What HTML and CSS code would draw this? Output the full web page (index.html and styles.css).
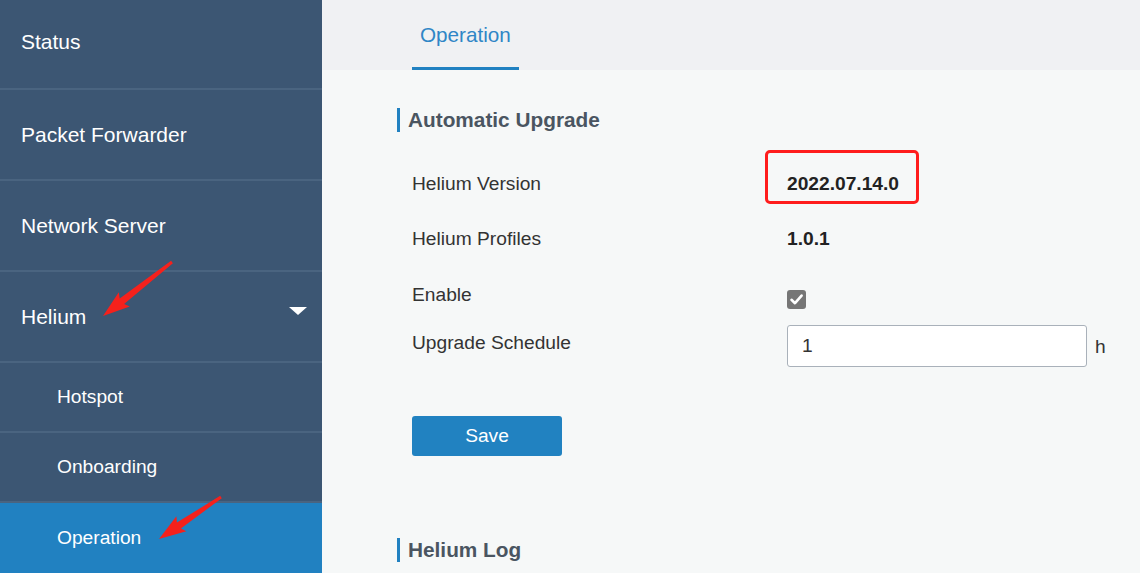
FILE: index.html
```html
<!DOCTYPE html>
<html lang="en">
<head>
<meta charset="utf-8">
<title>Helium Operation</title>
<link rel="stylesheet" href="styles.css">
</head>
<body>
<div class="app">
  <nav class="sidebar">
    <div class="nav-item first">Status</div>
    <div class="nav-item">Packet Forwarder</div>
    <div class="nav-item">Network Server</div>
    <div class="nav-item open">Helium<span class="caret"></span></div>
    <div class="nav-sub">Hotspot</div>
    <div class="nav-sub">Onboarding</div>
    <div class="nav-sub active">Operation</div>
  </nav>
  <main class="main">
    <header class="tabs">
      <div class="tab active">Operation</div>
    </header>
    <section class="content">
      <h2 class="section-title">Automatic Upgrade</h2>
      <div class="form">
        <div class="row r1">
          <div class="label">Helium Version</div>
          <div class="value"><span class="highlight">2022.07.14.0</span></div>
        </div>
        <div class="row r2">
          <div class="label">Helium Profiles</div>
          <div class="value">1.0.1</div>
        </div>
        <div class="row r3">
          <div class="label">Enable</div>
          <div class="field"><span class="checkbox"><svg viewBox="0 0 19 19" width="19" height="19"><path d="M4.5 9.8 L8 13.2 L14.6 5.6" fill="none" stroke="#fff" stroke-width="2.6" stroke-linecap="round" stroke-linejoin="round"/></svg></span></div>
        </div>
        <div class="row r4">
          <div class="label">Upgrade Schedule</div>
          <div class="field"><input class="text-input" type="text" value="1"><span class="unit">h</span></div>
        </div>
        <div class="actions">
          <button class="btn" type="button">Save</button>
        </div>
      </div>
      <h2 class="section-title log">Helium Log</h2>
    </section>
  </main>
</div>
<svg class="annot" width="1140" height="573" viewBox="0 0 1140 573">
  <polygon fill="#f5211c" points="171.1,260.8 119.7,298.4 118.8,292.3 103,316 129.8,306.5 124.1,303.9 172.9,263.2"/>
  <polygon fill="#f5211c" points="220.2,495.8 176.9,522.6 176.4,516.3 159,539 186.4,531.3 180.9,528.4 221.8,498.2"/>
</svg>
</body>
</html>
```
FILE: styles.css
```css
* { box-sizing: border-box; }
html, body { margin: 0; padding: 0; }
body {
  font-family: "Liberation Sans", Arial, sans-serif;
  width: 1140px;
  height: 573px;
  overflow: hidden;
  position: relative;
  background: #f6f8f8;
}
.app { display: flex; height: 573px; }

.sidebar {
  width: 322px;
  flex: none;
  background: #3c5673;
  color: #fff;
  display: flex;
  flex-direction: column;
}
.nav-item {
  height: 91px;
  border-bottom: 2px solid #4a6480;
  font-size: 21px;
  padding-left: 21px;
  display: flex;
  align-items: center;
  position: relative;
}
.nav-item.first { height: 90px; padding-bottom: 4px; }
.nav-item.open { padding-top: 1px; }
.caret {
  position: absolute;
  right: 15px;
  top: 35px;
  width: 0; height: 0;
  border-left: 9px solid transparent;
  border-right: 9px solid transparent;
  border-top: 8px solid #fff;
}
.nav-sub {
  height: 70px;
  border-bottom: 2px solid #4a6480;
  font-size: 19.2px;
  padding-left: 57px;
  display: flex;
  align-items: center;
}
.nav-sub.active {
  background: #2181c1;
  border-bottom: none;
  height: 70px;
}

.main { flex: 1; display: flex; flex-direction: column; }
.tabs {
  height: 70px;
  background: #f0f1f3;
  display: flex;
  padding-left: 90px;
}
.tab {
  padding: 3px 8px 0 8px;
  height: 70px;
  font-size: 20.7px;
  color: #2f86c6;
  display: flex;
  align-items: center;
  border-bottom: 3px solid #2181c1;
}
.content { padding-left: 75px; }
.section-title {
  margin: 38px 0 0 0;
  height: 24px;
  border-left: 3px solid #2181c1;
  padding-left: 8px;
  font-size: 20.8px;
  line-height: 24px;
  font-weight: bold;
  color: #4a5561;
}
.section-title.log { margin-top: 82px; }

.form { padding-left: 15px; }
.row { display: flex; align-items: flex-start; }
.label {
  width: 375px;
  flex: none;
  font-size: 19.2px;
  line-height: 24px;
  color: #333;
}
.value {
  font-size: 19.2px;
  line-height: 24px;
  font-weight: bold;
  color: #222;
}
.r1 { margin-top: 40px; }
.r2 { margin-top: 31px; }
.r3 { margin-top: 32px; }
.r4 { margin-top: 16px; }
.r4 .label { margin-top: 6px; }
.highlight { position: relative; display: inline-block; }
.highlight::after {
  content: "";
  position: absolute;
  left: -22px;
  top: -22px;
  width: 148px;
  height: 48px;
  border: 3px solid #ff1d1d;
  border-radius: 5px;
}
.field { display: flex; align-items: center; }
.checkbox {
  margin-top: 7px;
  width: 19px;
  height: 19px;
  border-radius: 3px;
  background: #767676;
  display: block;
}
.checkbox svg { display: block; }
.text-input {
  width: 300px;
  height: 42px;
  border: 1px solid #a9b1ba;
  border-radius: 3px;
  background: #fff;
  font-family: "Liberation Sans", Arial, sans-serif;
  font-size: 19.2px;
  color: #333;
  padding: 0 0 0 14px;
  margin: 0;
}
.unit {
  font-size: 19.2px;
  color: #333;
  margin-left: 8px;
  margin-top: 2px;
}
.actions { margin-top: 49px; }
.btn {
  width: 150px;
  height: 40px;
  background: #2182c1;
  border: none;
  border-radius: 3px;
  color: #fff;
  font-family: "Liberation Sans", Arial, sans-serif;
  font-size: 19.2px;
  padding: 0;
  margin: 0;
}
.annot {
  position: absolute;
  left: 0;
  top: 0;
  pointer-events: none;
}
```
